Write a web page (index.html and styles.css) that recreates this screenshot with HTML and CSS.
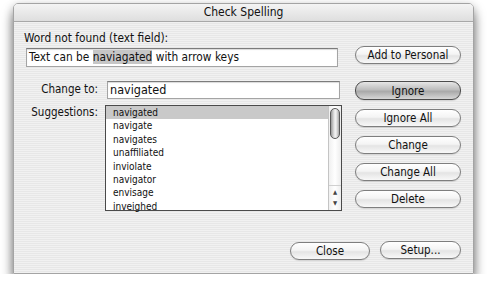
FILE: index.html
```html
<!DOCTYPE html>
<html lang="en">
<head>
  <meta charset="UTF-8">
  <title>Check Spelling</title>
  <link rel="stylesheet" href="styles.css">
</head>
<body>

<div class="window">
  <div class="titlebar">Check Spelling</div>

  <div class="content">
    <div class="main">
      <div class="left-col">
        <div class="label">Word not found (text field):</div>
        <div class="field field-word">Text can be <span class="hilite">naviagated</span> with arrow keys</div>

        <div class="change-row">
          <div class="side-label">Change to:</div>
          <div class="field field-change">navigated</div>
        </div>

        <div class="suggest-row">
          <div class="side-label">Suggestions:</div>
          <div class="listbox">
            <ul class="items">
              <li class="selected">navigated</li>
              <li>navigate</li>
              <li>navigates</li>
              <li>unaffiliated</li>
              <li>inviolate</li>
              <li>navigator</li>
              <li>envisage</li>
              <li>inveighed</li>
            </ul>
            <div class="scrollbar">
              <div class="track"><div class="thumb"></div></div>
              <div class="arrows">
                <span class="arrow">&#9650;</span>
                <span class="arrow">&#9660;</span>
              </div>
            </div>
          </div>
        </div>
      </div>

      <div class="right-col">
        <button class="btn">Add to Personal</button>
        <button class="btn default">Ignore</button>
        <button class="btn">Ignore All</button>
        <button class="btn">Change</button>
        <button class="btn">Change All</button>
        <button class="btn">Delete</button>
      </div>
    </div>

    <div class="footer">
      <button class="btn btn-close">Close</button>
      <button class="btn btn-setup">Setup...</button>
    </div>
  </div>
</div>

</body>
</html>
```

FILE: styles.css
```css
body {
  margin: 0;
  background-color: #ffffff;
  font-family: "DejaVu Sans Condensed", "DejaVu Sans", Arial, sans-serif;
  font-size: 11.8px;
  color: #111;
}
.window {
  margin: 3px 0 0 13px;
  width: 461px;
  height: 271px;
  box-sizing: border-box;
  border: 1px solid #a4a4a4;
  border-radius: 5px 5px 0 0;
  background: repeating-linear-gradient(#f1f1f1 0 1px, #e7e7e7 1px 2px);
  box-shadow: 0 9px 12px rgba(0, 0, 0, 0.5), 0 2px 10px rgba(0, 0, 0, 0.2);
  overflow: hidden;
}
.titlebar {
  height: 17px;
  line-height: 17px;
  text-align: center;
  font-size: 12px;
  border-bottom: 1px solid #a8a8a8;
  background: linear-gradient(#f4f4f4, #dedede);
}
.content {
  padding: 9px 12px 0 9px;
}
.main {
  display: flex;
  justify-content: space-between;
}
.left-col {
  width: 320px;
}
.label {
  height: 13px;
  line-height: 13px;
  margin-top: 1px;
  padding-left: 1px;
}
.field {
  box-sizing: border-box;
  background: #fff;
  border: 1px solid #a4a4a4;
  border-top-color: #7c7c7c;
  box-shadow: inset 0 1px 1px rgba(0, 0, 0, 0.15);
  white-space: nowrap;
  overflow: hidden;
}
.field-word {
  margin: 3px 0 0 3px;
  width: 312px;
  height: 19px;
  line-height: 17px;
  font-size: 11.8px;
  padding-left: 2px;
}
.hilite {
  background: #c6c6c6;
}
.change-row, .suggest-row {
  display: flex;
  align-items: flex-start;
}
.change-row {
  margin-top: 14px;
}
.suggest-row {
  margin-top: 6px;
}
.side-label {
  width: 75px;
  text-align: right;
  line-height: 17px;
  font-size: 11.5px;
}
.change-row .side-label {
  margin-right: 9px;
}
.suggest-row .side-label {
  margin-right: 7px;
  margin-top: -1px;
}
.field-change {
  width: 233px;
  height: 18px;
  line-height: 16px;
  font-size: 12.5px;
  padding-left: 2px;
}
.listbox {
  box-sizing: border-box;
  width: 237px;
  height: 106px;
  border: 1px solid #4a4a4a;
  background: #fff;
  display: flex;
}
.items {
  list-style: none;
  margin: 0;
  padding: 0;
  flex: 1;
  font-size: 10px;
}
.items li {
  height: 13.4px;
  line-height: 13.4px;
  padding-left: 7px;
}
.items li.selected {
  background: #c9c9c9;
}
.scrollbar {
  width: 12px;
  border-left: 1px solid #c4c4c4;
  display: flex;
  flex-direction: column;
  background: linear-gradient(90deg, #f0f0f0, #fff 50%, #ececec);
}
.track {
  flex: 1;
  padding: 2px 1px 0 1px;
}
.thumb {
  height: 29px;
  border: 1px solid #5a5a5a;
  border-radius: 5px;
  background: linear-gradient(90deg, #9a9a9a, #e4e4e4 40%, #f4f4f4 60%, #a8a8a8);
}
.arrows {
  height: 24px;
  display: flex;
  flex-direction: column;
  align-items: center;
  border-top: 1px solid #d0d0d0;
}
.arrow {
  font-size: 6px;
  line-height: 11px;
  color: #444;
}
.right-col {
  width: 106px;
  display: flex;
  flex-direction: column;
  gap: 9px;
  margin-top: 15px;
}
.btn {
  box-sizing: border-box;
  height: 18px;
  padding: 0;
  font-family: "DejaVu Sans Condensed", "DejaVu Sans", Arial, sans-serif;
  font-size: 11.5px;
  color: #111;
  border: 1px solid #7e7e7e;
  border-radius: 9px;
  background: linear-gradient(#ffffff, #f4f4f4 45%, #e4e4e4 55%, #f8f8f8);
  box-shadow: 0 1px 1px rgba(0, 0, 0, 0.12);
}
.right-col .btn.default {
  margin-top: 8px;
  height: 19px;
  border-color: #4c4c4c;
  background: linear-gradient(#e6e6e6, #bdbdbd 45%, #a9a9a9 55%, #d6d6d6);
}
.footer {
  display: flex;
  justify-content: flex-end;
  gap: 10px;
  margin-top: 30px;
}
.btn-close {
  width: 80px;
  margin-top: 1px;
}
.btn-setup {
  width: 81px;
}
```
